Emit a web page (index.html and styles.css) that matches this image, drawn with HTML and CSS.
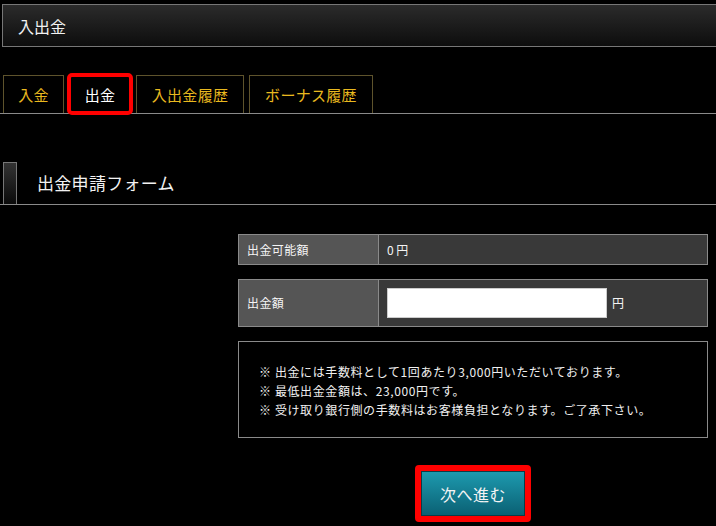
FILE: index.html
```html
<!DOCTYPE html>
<html lang="ja">
<head>
<meta charset="utf-8">
<link rel="stylesheet" href="styles.css">
</head>
<body>
<div class="page-title"><h1>入出金</h1></div>
<nav class="tabs">
  <a class="tab t1">入金</a>
  <a class="tab t2 active">出金</a>
  <a class="tab t3">入出金履歴</a>
  <a class="tab t4">ボーナス履歴</a>
</nav>
<div class="section-head"><span class="mark"></span><h2>出金申請フォーム</h2></div>
<div class="form">
  <div class="row r1"><div class="label">出金可能額</div><div class="value">0 円</div></div>
  <div class="row r2"><div class="label">出金額</div><div class="value"><span class="input"></span><span class="unit">円</span></div></div>
  <div class="notes">
    <p>※ 出金には手数料として1回あたり3,000円いただいております。</p>
    <p>※ 最低出金金額は、23,000円です。</p>
    <p>※ 受け取り銀行側の手数料はお客様負担となります。ご了承下さい。</p>
  </div>
  <div class="actions"><button class="next">次へ進む</button></div>
</div>
</body>
</html>
```
FILE: styles.css
```css
* { box-sizing: border-box; }
html, body { margin: 0; padding: 0; }
body {
  background: #000;
  color: #fff;
  font-family: "Noto Sans CJK JP", "Noto Sans", sans-serif;
  width: 716px;
  height: 526px;
  overflow: hidden;
}
.page-title {
  margin: 4px 0 0 2px;
  height: 43px;
  border: 1px solid #777;
  border-right: none;
  background: linear-gradient(#2b2b2b, #0d0d0d);
  display: flex;
  align-items: center;
  padding-left: 15px;
}
.page-title h1 {
  margin: 0;
  font-size: 16px;
  font-weight: 400;
  line-height: 20px;
  color: #f2f2f2;
}
.tabs {
  margin-top: 28px;
  display: flex;
  gap: 5px;
  padding-left: 3px;
  border-bottom: 1px solid #8a8a8a;
  height: 39px;
}
.tab {
  height: 38px;
  border: 1px solid #5e532c;
  border-bottom: none;
  display: flex;
  align-items: center;
  justify-content: center;
  color: #e9b91f;
  font-size: 15px;
  line-height: 18px;
  letter-spacing: 0.3px;
}
.t1 { width: 61px; }
.t2 { width: 62px; color: #fff; outline: 4px solid #f00; outline-offset: -2px; border-radius: 3px; border-color: #222; }
.t3 { width: 108px; }
.t4 { width: 124px; }
.section-head {
  margin-top: 48px;
  height: 43px;
  display: flex;
  align-items: center;
  border-bottom: 1px solid #8a8a8a;
  padding-left: 3px;
}
.section-head .mark {
  width: 14px;
  height: 42px;
  border: 1px solid #777;
  border-bottom: none;
  background: linear-gradient(#333, #0a0a0a);
  align-self: flex-end;
}
.section-head h2 {
  margin: 0 0 0 20px;
  font-size: 17px;
  font-weight: 400;
  line-height: 20px;
  color: #f2f2f2;
  letter-spacing: 0.3px;
}
.form {
  margin: 29px 0 0 238px;
  width: 470px;
  display: flex;
  flex-direction: column;
}
.row {
  display: flex;
  border: 1px solid #8a8a8a;
  font-size: 12px;
  line-height: 16px;
}
.r1 { height: 31px; }
.r2 { height: 48px; margin-top: 14px; }
.label {
  width: 140px;
  background: #555;
  border-right: 1px solid #8a8a8a;
  display: flex;
  align-items: center;
  padding-left: 8px;
  color: #f4f4f4;
  letter-spacing: 0.4px;
}
.value {
  flex: 1;
  background: #393939;
  display: flex;
  align-items: center;
  padding-left: 8px;
  color: #f4f4f4;
}
.input {
  width: 220px;
  height: 30px;
  background: #fff;
  border: 1px solid #ccc;
  display: block;
}
.unit { margin-left: 5px; }
.notes {
  margin-top: 14px;
  height: 97px;
  border: 1px solid #8a8a8a;
  padding: 20px 0 0 20px;
  font-size: 12px;
  line-height: 19px;
  letter-spacing: 0.6px;
  color: #f0f0f0;
}
.notes p { margin: 0; }
.actions {
  display: flex;
  justify-content: center;
  margin-top: 27px;
}
.next {
  width: 116px;
  height: 57px;
  border: 6px solid #f00;
  border-radius: 4px;
  background: linear-gradient(#1e9bb0, #0a5f72);
  box-shadow: inset 0 0 0 1px #0b3c47;
  color: #f4f4f4;
  font-family: "Noto Sans CJK JP", sans-serif;
  font-size: 16px;
  line-height: 20px;
  letter-spacing: 0.5px;
  padding: 0;
}
```
